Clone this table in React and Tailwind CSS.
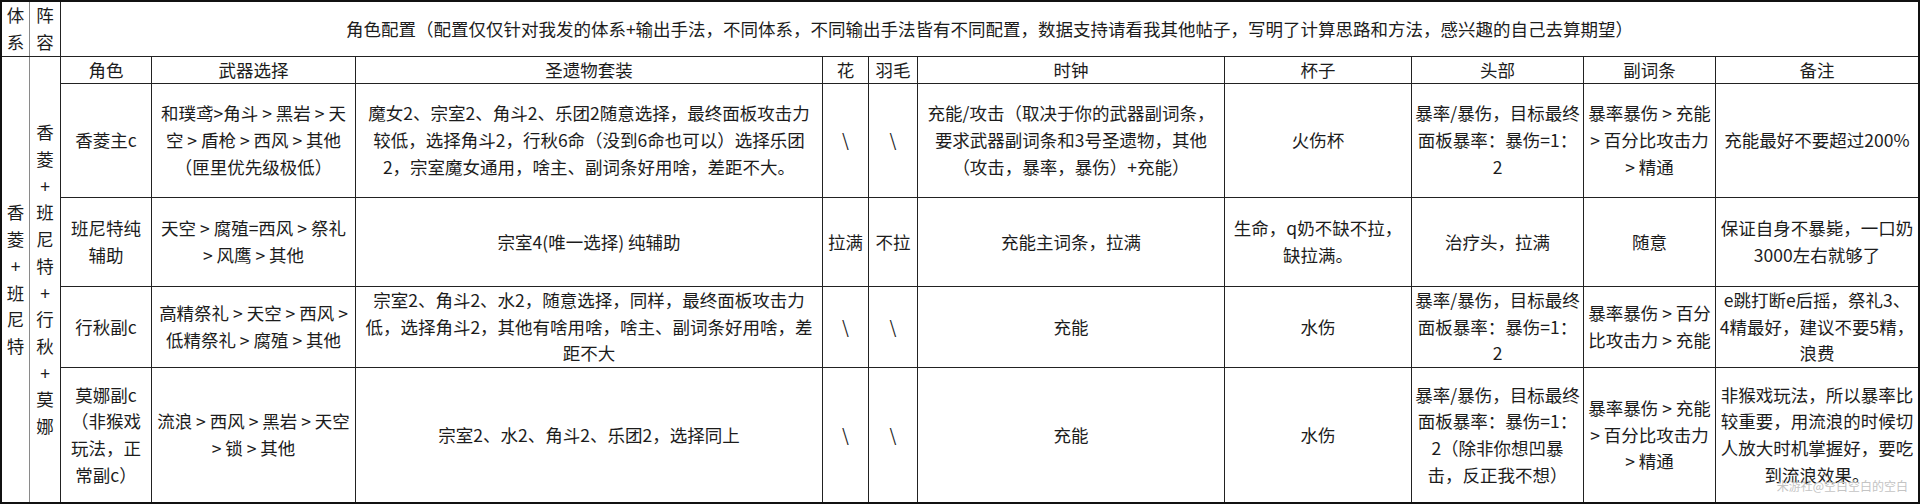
import React from "react";

const F = { fontFamily: '"Noto Sans CJK SC", "Microsoft YaHei", sans-serif' };

function Cell({ children, className = "" }) {
  return (
    <div className={"bg-white flex items-center justify-center text-center overflow-visible " + className}>
      <div className="whitespace-nowrap">{children}</div>
    </div>
  );
}

function Lines({ lines }) {
  return (
    <>
      {lines.map((l, i) => (
        <div key={i}>{l}</div>
      ))}
    </>
  );
}

const headers = ["角色", "武器选择", "圣遗物套装", "花", "羽毛", "时钟", "杯子", "头部", "副词条", "备注"];

const rows = [
  [
    ["香菱主c"],
    ["和璞鸢>角斗 > 黑岩 > 天", "空 > 盾枪 > 西风 > 其他", "（匣里优先级极低）"],
    ["魔女2、宗室2、角斗2、乐团2随意选择，最终面板攻击力", "较低，选择角斗2，行秋6命（没到6命也可以）选择乐团", "2，宗室魔女通用，啥主、副词条好用啥，差距不大。"],
    ["\\"],
    ["\\"],
    ["充能/攻击（取决于你的武器副词条，", "要求武器副词条和3号圣遗物，其他", "（攻击，暴率，暴伤）+充能）"],
    ["火伤杯"],
    ["暴率/暴伤，目标最终", "面板暴率：暴伤=1：", "2"],
    ["暴率暴伤 > 充能", "> 百分比攻击力", "> 精通"],
    ["充能最好不要超过200%"],
  ],
  [
    ["班尼特纯", "辅助"],
    ["天空 > 腐殖=西风 > 祭礼", "> 风鹰 > 其他"],
    ["宗室4(唯一选择)  纯辅助"],
    ["拉满"],
    ["不拉"],
    ["充能主词条，拉满"],
    ["生命，q奶不缺不拉，", "缺拉满。"],
    ["治疗头，拉满"],
    ["随意"],
    ["保证自身不暴毙，一口奶", "3000左右就够了"],
  ],
  [
    ["行秋副c"],
    ["高精祭礼 > 天空 > 西风 >", "低精祭礼 > 腐殖 > 其他"],
    ["宗室2、角斗2、水2，随意选择，同样，最终面板攻击力", "低，选择角斗2，其他有啥用啥，啥主、副词条好用啥，差", "距不大"],
    ["\\"],
    ["\\"],
    ["充能"],
    ["水伤"],
    ["暴率/暴伤，目标最终", "面板暴率：暴伤=1：", "2"],
    ["暴率暴伤 > 百分", "比攻击力 > 充能"],
    ["e跳打断e后摇，祭礼3、", "4精最好，建议不要5精，", "浪费"],
  ],
  [
    ["莫娜副c", "（非猴戏", "玩法，正", "常副c）"],
    ["流浪 > 西风 > 黑岩 > 天空", "> 锁 > 其他"],
    ["宗室2、水2、角斗2、乐团2，选择同上"],
    ["\\"],
    ["\\"],
    ["充能"],
    ["水伤"],
    ["暴率/暴伤，目标最终", "面板暴率：暴伤=1：", "2（除非你想凹暴", "击，反正我不想）"],
    ["暴率暴伤 > 充能", "> 百分比攻击力", "> 精通"],
    ["非猴戏玩法，所以暴率比", "较重要，用流浪的时候切", "人放大时机掌握好，要吃", "到流浪效果。"],
  ],
];

export default function App() {
  return (
    <div className="w-[1920px] h-[504px] bg-white relative text-[#1c1c1c] text-[17.5px] leading-[26.7px]" style={F}>
      <div className="border-2 border-[#111] bg-[#222] grid gap-px grid-cols-[27px_30px_90px_203px_466px_45px_48px_306px_186px_171px_131px_202px] grid-rows-[54px_26px_113px_88px_80px_134px]">
        <Cell className="mr-[-1px] border-r border-[#8a8a8a]"><Lines lines={["体", "系"]} /></Cell>
        <Cell><Lines lines={["阵", "容"]} /></Cell>
        <Cell className="col-span-10">
          角色配置（配置仅仅针对我发的体系+输出手法，不同体系，不同输出手法皆有不同配置，数据支持请看我其他帖子，写明了计算思路和方法，感兴趣的自己去算期望）
        </Cell>
        <Cell className="row-span-5 mr-[-1px] border-r border-[#8a8a8a]"><Lines lines={["香", "菱", "+", "班", "尼", "特"]} /></Cell>
        <Cell className="row-span-5"><Lines lines={["香", "菱", "+", "班", "尼", "特", "+", "行", "秋", "+", "莫", "娜"]} /></Cell>
        {headers.map((h) => (
          <Cell key={h}>{h}</Cell>
        ))}
        {rows.map((r, ri) =>
          r.map((c, ci) => (
            <Cell key={ri + "-" + ci}>
              <Lines lines={c} />
            </Cell>
          ))
        )}
      </div>
      <div className="absolute right-[12px] bottom-[11px] text-[12px] leading-[14px] text-[#c4c4c4] whitespace-nowrap">
        米游社@空白空白的空白
      </div>
    </div>
  );
}
